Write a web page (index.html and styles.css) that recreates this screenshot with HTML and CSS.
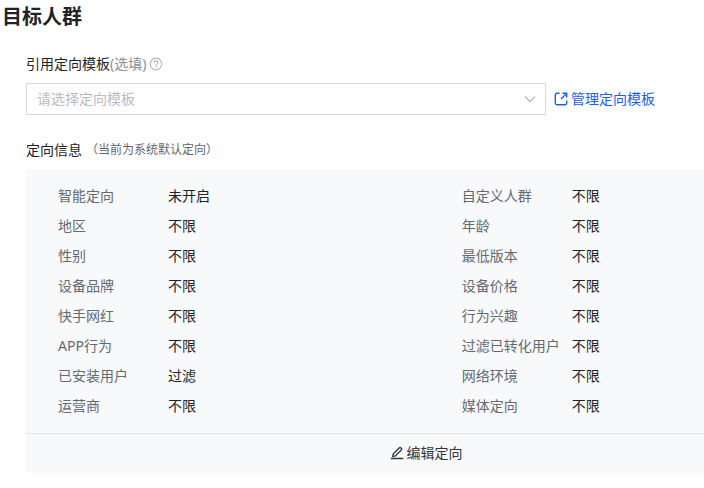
FILE: index.html
```html
<!DOCTYPE html>
<html lang="zh-CN">
<head>
<meta charset="utf-8">
<meta name="viewport" content="width=device-width, initial-scale=1">
<title>目标人群</title>
<link rel="stylesheet" href="styles.css">
</head>
<body>
<main class="audience">
  <h1 class="title">目标人群</h1>
  <section class="content">
    <div class="field-head">
      <label for="template">引用定向模板<span class="optional">(选填)</span></label>
      <svg class="help" viewBox="0 0 14 14" width="14" height="14" aria-hidden="true">
        <circle cx="7" cy="7" r="5.800"/>
        <path d="M5.200 5.700a1.800 1.800 0 1 1 2.700 1.500c-.6.3-.9.6-.9 1.200M7 9.300v1.200"/>
      </svg>
    </div>
    <div class="field-row">
      <div class="select-box">
        <select id="template" class="select">
          <option>请选择定向模板</option>
        </select>
        <svg class="chevron" viewBox="0 0 12 12" width="12" height="12" aria-hidden="true"><path d="M1 3.500l5 5 5-5"/></svg>
      </div>
      <a class="manage" href="#">
        <svg viewBox="0 0 14 14" width="14" height="14" aria-hidden="true"><path d="M5.500 1.300H3A1.700 1.700 0 0 0 1.300 3v8A1.700 1.700 0 0 0 3 12.700h8a1.700 1.700 0 0 0 1.700-1.700V8.500M8.500 1.300h4.200v4.200M12.500 1.500L7 7"/></svg>
        <span>管理定向模板</span>
      </a>
    </div>
    <div class="info-head">
      <h2 class="info-title">定向信息</h2>
      <span class="info-note">（当前为系统默认定向）</span>
    </div>
    <div class="panel">
      <div class="columns">
        <dl class="list">
          <dt>智能定向</dt><dd>未开启</dd>
          <dt>地区</dt><dd>不限</dd>
          <dt>性别</dt><dd>不限</dd>
          <dt>设备品牌</dt><dd>不限</dd>
          <dt>快手网红</dt><dd>不限</dd>
          <dt>APP行为</dt><dd>不限</dd>
          <dt>已安装用户</dt><dd>过滤</dd>
          <dt>运营商</dt><dd>不限</dd>
        </dl>
        <dl class="list">
          <dt>自定义人群</dt><dd>不限</dd>
          <dt>年龄</dt><dd>不限</dd>
          <dt>最低版本</dt><dd>不限</dd>
          <dt>设备价格</dt><dd>不限</dd>
          <dt>行为兴趣</dt><dd>不限</dd>
          <dt>过滤已转化用户</dt><dd>不限</dd>
          <dt>网络环境</dt><dd>不限</dd>
          <dt>媒体定向</dt><dd>不限</dd>
        </dl>
      </div>
      <div class="panel-foot">
        <button type="button" class="edit">
          <svg viewBox="0 0 14 14" width="14" height="14" aria-hidden="true"><path d="M.8 12.500h12.400M2.800 10.300l.5-2.500 5.900-5.900a1.200 1.200 0 0 1 1.700 0l.4.4a1.200 1.200 0 0 1 0 1.700L5.400 9.900z"/></svg>
          <span>编辑定向</span>
        </button>
      </div>
    </div>
  </section>
</main>
</body>
</html>
```

FILE: styles.css
```css
* {
  box-sizing: border-box;
}

body {
  margin: 0;
  background: #fff;
  color: #1f2329;
  font: 14px/22px "Noto Sans", "Noto Sans CJK SC", sans-serif;
}

svg {
  flex: none;
  fill: none;
  stroke: currentColor;
  stroke-width: 1.4;
}

.title {
  margin: 0;
  padding: 3px 2px 1px;
  font-size: 20px;
  line-height: 28px;
  font-weight: 700;
}

.content {
  padding: 21px 0 0 26px;
}

.field-head {
  display: flex;
  align-items: center;
  gap: 3px;
}

.optional {
  color: #8a9099;
}

.help {
  color: #b4b8bf;
  stroke-width: 1.2;
}

.field-row {
  display: flex;
  align-items: center;
  gap: 8px;
  margin-top: 8px;
  padding-right: 48px;
}

.select-box {
  position: relative;
  flex: 1;
  max-width: 520px;
}

.select {
  display: block;
  width: 100%;
  height: 32px;
  padding: 0 32px 0 10px;
  appearance: none;
  border: 1px solid #d6d8dc;
  border-radius: 0;
  background: #fff;
  color: #b8bbc0;
  font: inherit;
}

.chevron {
  position: absolute;
  top: 10px;
  right: 10px;
  color: #b8bbc0;
  pointer-events: none;
}

.manage,
.edit {
  display: flex;
  align-items: center;
  gap: 3px;
  white-space: nowrap;
}

.manage {
  color: #1f5cf0;
  text-decoration: none;
}

.info-head {
  display: flex;
  align-items: center;
  gap: 4px;
  margin-top: 24px;
}

.info-title {
  margin: 0;
  font-size: 14px;
  font-weight: 400;
}

.info-note {
  color: #5f6670;
  font-size: 12px;
}

.panel {
  margin-top: 8px;
  background: #f8f9fb;
}

.columns {
  display: grid;
  grid-template-columns: 5fr 3fr;
  padding: 16px 0 16px 32px;
}

.list {
  display: grid;
  grid-template-columns: 110px 1fr;
  row-gap: 8px;
  align-content: start;
  margin: 0;
}

.list dt {
  color: #646a73;
  white-space: nowrap;
}

.list dd {
  margin: 0;
}

.panel-foot {
  display: flex;
  justify-content: center;
  padding: 8px 0 9px 18%;
  border-top: 1px solid #e4e6e9;
}

.edit {
  padding: 0;
  border: 0;
  background: none;
  color: #33373d;
  font: inherit;
}
```
